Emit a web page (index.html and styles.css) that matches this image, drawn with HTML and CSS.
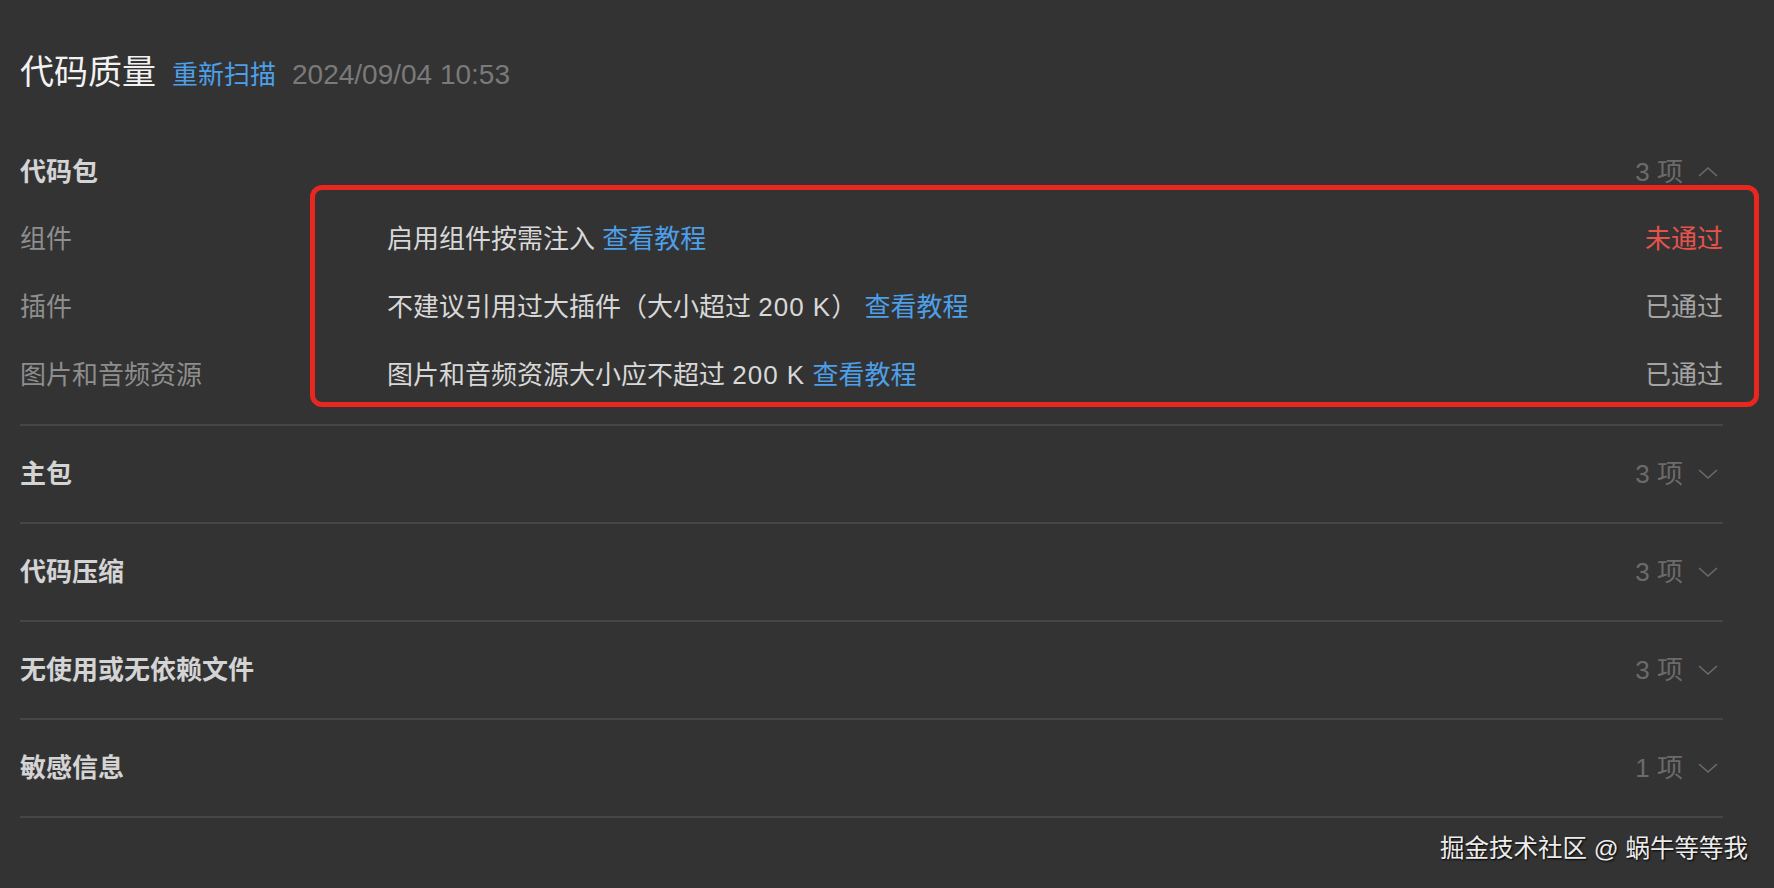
FILE: index.html
```html
<!DOCTYPE html>
<html lang="zh-CN">
<head>
    <meta charset="UTF-8">
    <meta name="viewport" content="width=device-width, initial-scale=1.0">
    <title>代码质量</title>
    <link rel="stylesheet" href="styles.css">
</head>
<body>

<div class="page">
    <div class="title-bar">
        <h1 class="title">代码质量</h1>
        <a class="link rescan" href="#">重新扫描</a>
        <span class="scan-time">2024/09/04 10:53</span>
    </div>

    <div class="section open">
        <div class="section-head">
            <span class="section-name">代码包</span>
            <span class="count">3 项</span>
            <svg class="chevron" viewBox="0 0 20 12"><polyline points="1,10 10,2 19,10"/></svg>
        </div>
        <div class="section-body">
            <div class="item">
                <span class="item-label">组件</span>
                <span class="item-desc">启用组件按需注入 <a class="link" href="#">查看教程</a></span>
                <span class="status fail">未通过</span>
            </div>
            <div class="item">
                <span class="item-label">插件</span>
                <span class="item-desc">不建议引用过大插件（大小超过 <span class="num">200 K</span>） <a class="link" href="#">查看教程</a></span>
                <span class="status">已通过</span>
            </div>
            <div class="item">
                <span class="item-label">图片和音频资源</span>
                <span class="item-desc">图片和音频资源大小应不超过 <span class="num">200 K</span> <a class="link" href="#">查看教程</a></span>
                <span class="status">已通过</span>
            </div>
            <div class="highlight-box"></div>
        </div>
    </div>

    <div class="section">
        <div class="section-head">
            <span class="section-name">主包</span>
            <span class="count">3 项</span>
            <svg class="chevron" viewBox="0 0 20 12"><polyline points="1,2 10,10 19,2"/></svg>
        </div>
    </div>

    <div class="section">
        <div class="section-head">
            <span class="section-name">代码压缩</span>
            <span class="count">3 项</span>
            <svg class="chevron" viewBox="0 0 20 12"><polyline points="1,2 10,10 19,2"/></svg>
        </div>
    </div>

    <div class="section">
        <div class="section-head">
            <span class="section-name">无使用或无依赖文件</span>
            <span class="count">3 项</span>
            <svg class="chevron" viewBox="0 0 20 12"><polyline points="1,2 10,10 19,2"/></svg>
        </div>
    </div>

    <div class="section">
        <div class="section-head">
            <span class="section-name">敏感信息</span>
            <span class="count">1 项</span>
            <svg class="chevron" viewBox="0 0 20 12"><polyline points="1,2 10,10 19,2"/></svg>
        </div>
    </div>
</div>

<div class="watermark">掘金技术社区 @ 蜗牛等等我</div>

</body>
</html>
```

FILE: styles.css
```css
body {
    margin: 0;
    background-color: #333333;
    color: #d8d8d8;
    font-family: "Liberation Sans", "Noto Sans CJK SC", sans-serif;
}
.page {
    padding: 49px 51px 0 20px;
}
.title-bar {
    display: flex;
    align-items: baseline;
    line-height: 46px;
    margin-bottom: 26px;
}
.title {
    margin: 0;
    font-size: 34px;
    font-weight: 400;
    color: #f2f2f2;
}
.link {
    color: #4c9fe8;
    text-decoration: none;
}
.rescan {
    margin-left: 16px;
    font-size: 26px;
}
.scan-time {
    margin-left: 16px;
    font-size: 28px;
    color: #7a7a7a;
}
.section {
    border-bottom: 2px solid #464646;
}
.section-head {
    display: flex;
    align-items: center;
    padding: 36px 0;
    line-height: 24px;
}
.section.open .section-head {
    padding-bottom: 0;
}
.section-name {
    font-size: 26px;
    font-weight: 700;
    color: #d4d4d4;
}
.count {
    margin-left: auto;
    font-size: 26px;
    color: #6b6b6b;
}
.chevron {
    width: 20px;
    height: 12px;
    margin: 0 5px 0 15px;
    fill: none;
    stroke: #6b6b6b;
    stroke-width: 1.6;
}
.section-body {
    position: relative;
    padding: 18px 0;
}
.item {
    display: flex;
    align-items: center;
    height: 68px;
    font-size: 26px;
}
.item-label {
    width: 367px;
    color: #8e8e8e;
}
.item-desc {
    color: #d8d8d8;
}
.num {
    letter-spacing: 1px;
}
.status {
    margin-left: auto;
    color: #a4a4a4;
}
.status.fail {
    color: #e5534b;
}
.highlight-box {
    position: absolute;
    top: 1px;
    left: 290px;
    right: -36px;
    height: 222px;
    box-sizing: border-box;
    border: 5px solid #e8281e;
    border-radius: 12px;
    pointer-events: none;
}
.watermark {
    position: absolute;
    top: 833px;
    right: 26px;
    font-size: 24.5px;
    line-height: 32px;
    color: #ececec;
    text-shadow: 1px 1px 2px #000;
}
```
